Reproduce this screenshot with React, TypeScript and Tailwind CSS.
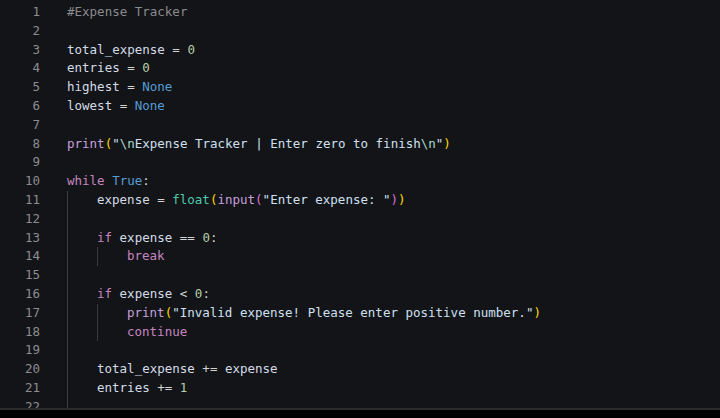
import React from 'react'

type Tok = [string, string]

const C = {
  txt: 'text-[#d3dde8]',
  op: 'text-[#d4d4d4]',
  cm: 'text-[#8a8c8f]',
  num: 'text-[#b5cea8]',
  kw: 'text-[#569cd6]',
  ctl: 'text-[#c586c0]',
  fn: 'text-[#c6a0dd]',
  cls: 'text-[#4ec9b0]',
  str: 'text-[#cfe0f2]',
  esc: 'text-[#a9d9c9]',
  b1: 'text-[#ffd700]',
  b2: 'text-[#da70d6]',
}

const lines: { indent: number; toks: Tok[] }[] = [
  { indent: 0, toks: [['#Expense Tracker', C.cm]] },
  { indent: 0, toks: [] },
  { indent: 0, toks: [['total_expense', C.txt], [' = ', C.op], ['0', C.num]] },
  { indent: 0, toks: [['entries', C.txt], [' = ', C.op], ['0', C.num]] },
  { indent: 0, toks: [['highest', C.txt], [' = ', C.op], ['None', C.kw]] },
  { indent: 0, toks: [['lowest', C.txt], [' = ', C.op], ['None', C.kw]] },
  { indent: 0, toks: [] },
  {
    indent: 0,
    toks: [
      ['print', C.fn],
      ['(', C.b1],
      ['"', C.str],
      ['\\n', C.esc],
      ['Expense Tracker | Enter zero to finish', C.str],
      ['\\n', C.esc],
      ['"', C.str],
      [')', C.b1],
    ],
  },
  { indent: 0, toks: [] },
  { indent: 0, toks: [['while', C.ctl], [' ', C.op], ['True', C.kw], [':', C.op]] },
  {
    indent: 1,
    toks: [
      ['expense', C.txt],
      [' = ', C.op],
      ['float', C.cls],
      ['(', C.b1],
      ['input', C.fn],
      ['(', C.b2],
      ['"Enter expense: "', C.str],
      [')', C.b2],
      [')', C.b1],
    ],
  },
  { indent: 1, toks: [] },
  { indent: 1, toks: [['if', C.ctl], [' expense ', C.txt], ['==', C.op], [' ', C.op], ['0', C.num], [':', C.op]] },
  { indent: 2, toks: [['break', C.ctl]] },
  { indent: 1, toks: [] },
  { indent: 1, toks: [['if', C.ctl], [' expense ', C.txt], ['<', C.op], [' ', C.op], ['0', C.num], [':', C.op]] },
  {
    indent: 2,
    toks: [
      ['print', C.fn],
      ['(', C.b1],
      ['"Invalid expense! Please enter positive number."', C.str],
      [')', C.b1],
    ],
  },
  { indent: 2, toks: [['continue', C.ctl]] },
  { indent: 1, toks: [] },
  { indent: 1, toks: [['total_expense', C.txt], [' += ', C.op], ['expense', C.txt]] },
  { indent: 1, toks: [['entries', C.txt], [' += ', C.op], ['1', C.num]] },
  { indent: 1, toks: [] },
]

function CodeLine({ n, indent, toks }: { n: number; indent: number; toks: Tok[] }) {
  return (
    <div className="flex h-[18.8px] leading-[18.8px] whitespace-pre">
      <span className="w-[40px] text-right text-[#8b8d90] shrink-0">{n}</span>
      <span className="w-[27px] shrink-0" />
      {Array.from({ length: indent }).map((_, i) => (
        <span key={i} className="w-[30px] h-full shrink-0 border-l border-[#3a3c40]" />
      ))}
      <span>
        {toks.map(([t, c], i) => (
          <span key={i} className={c}>
            {t}
          </span>
        ))}
      </span>
    </div>
  )
}

export default function App() {
  return (
    <div className="w-[720px] h-[418px] flex flex-col bg-black overflow-hidden">
      <div
        className="flex-1 bg-[#131417] pt-[3px] overflow-hidden text-[12.5px]"
        style={{ fontFamily: '"DejaVu Sans Mono", "Liberation Mono", monospace' }}
      >
        {lines.map((l, i) => (
          <CodeLine key={i} n={i + 1} indent={l.indent} toks={l.toks} />
        ))}
      </div>
      <div className="h-[10px] border-t-2 border-[#2a2b2d] bg-black" />
    </div>
  )
}
